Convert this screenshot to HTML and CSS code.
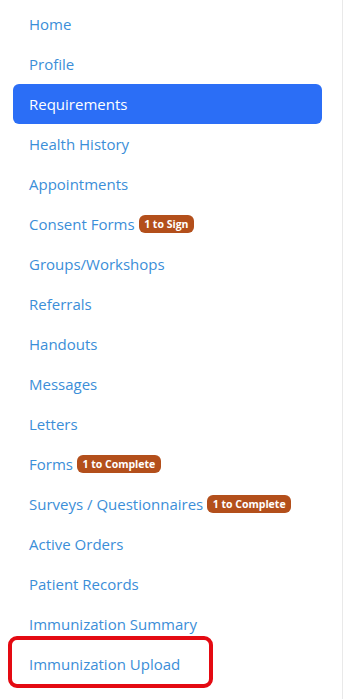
FILE: index.html
```
<!DOCTYPE html>
<html lang="en">
<head>
<meta charset="utf-8">
<link rel="stylesheet" href="styles.css">
</head>
<body>
<nav class="sidebar">
  <ul class="menu">
    <li class="item"><a href="#">Home</a></li>
    <li class="item"><a href="#">Profile</a></li>
    <li class="item active"><a href="#">Requirements</a></li>
    <li class="item"><a href="#">Health History</a></li>
    <li class="item"><a href="#">Appointments</a></li>
    <li class="item"><a href="#">Consent Forms</a><span class="badge">1 to Sign</span></li>
    <li class="item"><a href="#">Groups/Workshops</a></li>
    <li class="item"><a href="#">Referrals</a></li>
    <li class="item"><a href="#">Handouts</a></li>
    <li class="item"><a href="#">Messages</a></li>
    <li class="item"><a href="#">Letters</a></li>
    <li class="item"><a href="#">Forms</a><span class="badge">1 to Complete</span></li>
    <li class="item"><a href="#">Surveys / Questionnaires</a><span class="badge">1 to Complete</span></li>
    <li class="item"><a href="#">Active Orders</a></li>
    <li class="item"><a href="#">Patient Records</a></li>
    <li class="item"><a href="#">Immunization Summary</a></li>
    <li class="item highlighted"><a href="#">Immunization Upload</a><span class="callout"></span></li>
  </ul>
</nav>
</body>
</html>
```
FILE: styles.css
```
html, body {
  margin: 0;
  padding: 0;
  background: #ffffff;
}
body {
  font-family: "Open Sans", "Noto Sans", sans-serif;
  width: 346px;
  height: 699px;
  overflow: hidden;
}
.sidebar {
  width: 342px;
  height: 699px;
  border-right: 1px solid #e9e9e9;
  background: #ffffff;
}
.menu {
  list-style: none;
  margin: 0;
  padding: 4px 0 0 13px;
}
.item {
  position: relative;
  display: flex;
  align-items: center;
  gap: 4px;
  width: 309px;
  height: 40px;
  padding-left: 16px;
  box-sizing: border-box;
  border-radius: 6px;
}
.item a {
  color: #3b8ed8;
  text-decoration: none;
  font-size: 15px;
  white-space: nowrap;
}
.item.active {
  background: #2b6ef6;
}
.item.active a {
  color: #ffffff;
}
.badge {
  background: #b34f1b;
  color: #ffffff;
  font-size: 10.5px;
  font-weight: 700;
  line-height: 18px;
  padding: 0 5.5px;
  border-radius: 6px;
  white-space: nowrap;
}
.callout {
  position: absolute;
  left: -5px;
  top: -8px;
  width: 205px;
  height: 52px;
  border: 4px solid #e40a12;
  border-radius: 9px;
  box-sizing: border-box;
}
```
